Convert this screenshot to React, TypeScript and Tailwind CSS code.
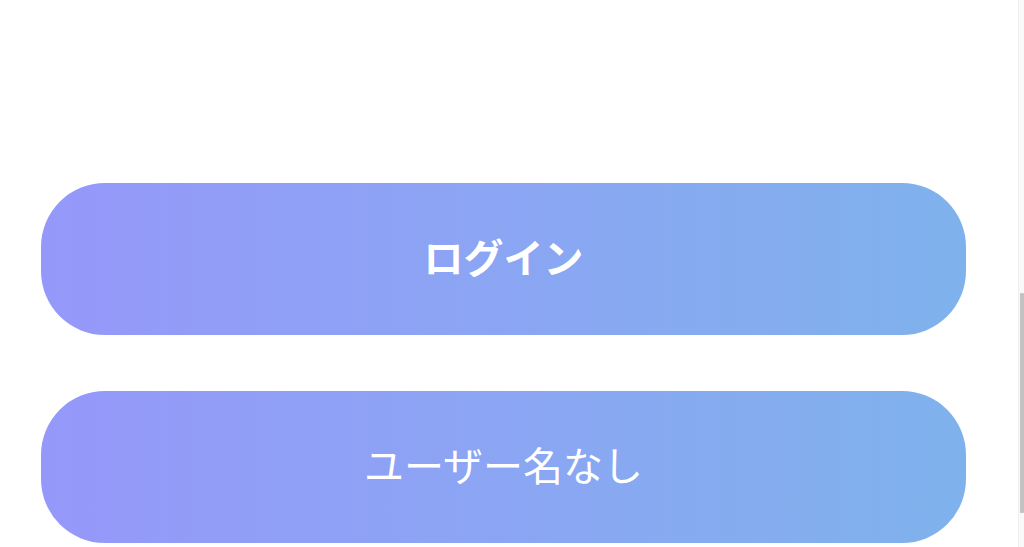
export default function App() {
  return (
    <div
      className="relative h-screen w-full overflow-hidden bg-white"
      style={{ fontFamily: '"Noto Sans CJK JP", "Noto Sans", sans-serif' }}
    >
      <div className="flex flex-col gap-[56px] pl-[41px] pr-[58px] pt-[183px]">
        <button className="flex h-[152px] w-full items-center justify-center rounded-[64px] bg-linear-to-r from-[#9598fa] to-[#7fb2ec] pb-[6px] text-[40px] font-bold leading-none text-white">
          ログイン
        </button>
        <button className="flex h-[152px] w-full items-center justify-center rounded-[64px] bg-linear-to-r from-[#9598fa] to-[#7fb2ec] pb-[6px] text-[40px] font-normal leading-none text-white">
          ユーザー名なし
        </button>
      </div>

      {/* scrollbar */}
      <div className="absolute right-0 top-0 h-full w-[6px] border-l border-[#efefef] bg-[#f9f9f9]">
        <div className="ml-[1px] mt-[293px] h-[220px] w-[4px] rounded-[1px] bg-[#c2c2c2]" />
      </div>
    </div>
  );
}
